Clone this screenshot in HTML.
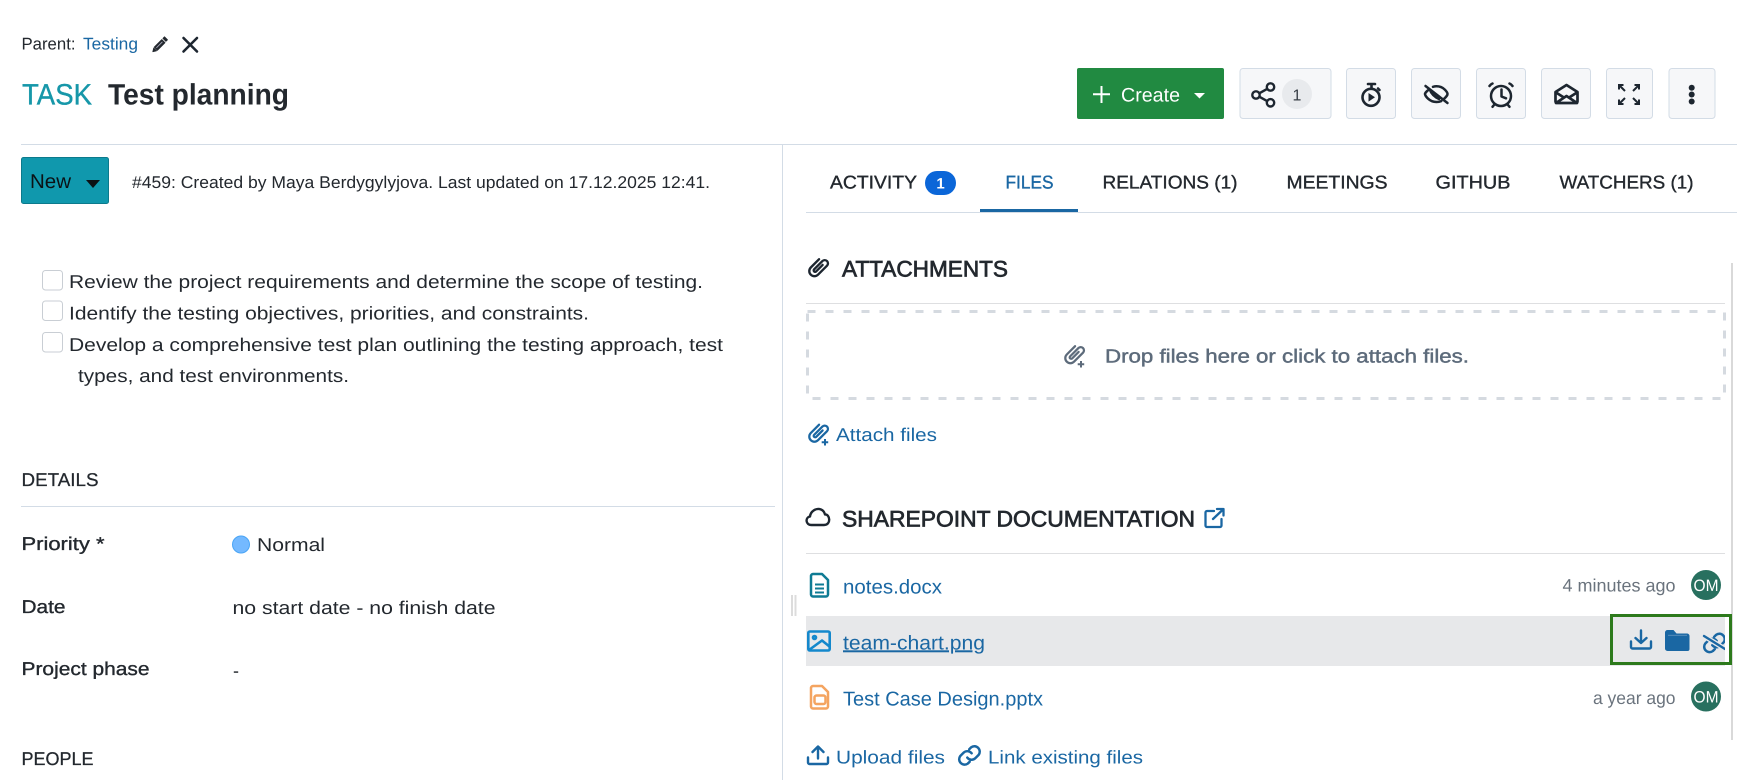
<!DOCTYPE html>
<html lang="en"><head><meta charset="utf-8"><title>Test planning</title>
<style>
html,body{margin:0;padding:0;background:#fff;width:1737px;height:780px;overflow:hidden}
svg{display:block}
text{font-family:"Liberation Sans",Arial,sans-serif;font-size:18.5px;fill:#23282e;text-rendering:geometricPrecision;white-space:pre}
.l{fill:#1a67a3}.m{stroke:#23282e;stroke-width:.35}.mb{stroke:#1a67a3;stroke-width:.35}
.h{font-size:22.5px;font-weight:400;stroke:#23282e;stroke-width:.7}
.s{fill:none;stroke:#1d2630;stroke-width:2.400;stroke-linecap:round;stroke-linejoin:round}
.b{fill:none;stroke:#1a67a3;stroke-width:2.300;stroke-linecap:round;stroke-linejoin:round}
.g{fill:#6a737d;font-size:18px}
</style></head><body>
<svg width="1737" height="780" viewBox="0 0 1737 780" xmlns="http://www.w3.org/2000/svg">
<defs>
<path id="clip" d="M3 4.500v11.500a5 5 0 0 0 10 0V3.500a3.200 3.200 0 0 0-6.400 0V15a1.400 1.400 0 0 0 2.800 0V6" fill="none" stroke-linecap="round" stroke-linejoin="round"/>
<path id="chain" d="M10 14a5 5 0 0 0 7.500.5l3-3a5 5 0 0 0-7-7l-1.700 1.700M14 10a5 5 0 0 0-7.500-.5l-3 3a5 5 0 0 0 7 7l1.700-1.700" fill="none" stroke-linecap="round" stroke-linejoin="round"/>
</defs>
<!-- lines -->
<rect x="21" y="144" width="1716" height="1" fill="#d3dce6"/>
<rect x="782" y="145" width="1" height="635" fill="#d3dce6"/>
<!-- parent -->
<text x="21.500" y="49.500" textLength="54" lengthAdjust="spacingAndGlyphs" style="font-size:17px">Parent:</text>
<text class="l" x="83" y="49.500" textLength="55" lengthAdjust="spacingAndGlyphs" style="font-size:17px">Testing</text>
<g transform="translate(152,36)"><path d="M12.500.8l3 3-1.600 1.600-3-3zM9.800 3.500l3.200 3.200-7.600 7.600-3.200-3.200zM1.700 12l2.800 2.800-3.700.9z" fill="#23282e" stroke="#23282e" stroke-width=".8" stroke-linejoin="round"/><path d="M10.400 5.800l-6 6" stroke="#aab" stroke-width=".9"/></g>
<path d="M183.500 38L197 51.500M197 38L183.500 51.500" stroke="#1d2630" stroke-width="2.600" stroke-linecap="round" fill="none"/>
<!-- title -->
<text x="22" y="104.300" textLength="70" lengthAdjust="spacingAndGlyphs" style="font-size:29.500px;fill:#1697a9;stroke:#1697a9;stroke-width:.35">TASK</text>
<text x="108" y="104.300" textLength="181" lengthAdjust="spacingAndGlyphs" style="font-size:29.500px;font-weight:700;fill:#23282e">Test planning</text>
<!-- create -->
<rect x="1077" y="68" width="147" height="51" rx="2" fill="#218a41"/>
<path d="M1093 94.300h17M1101.500 86v17" stroke="#fff" stroke-width="2" fill="none"/>
<text x="1121" y="101.300" textLength="59" lengthAdjust="spacingAndGlyphs" style="font-size:19.500px;fill:#fff">Create</text>
<path d="M1194 93h11l-5.500 5.500z" fill="#fff"/>
<!-- buttons -->
<g fill="#f6f7f9" stroke="#d3dce6" stroke-width="1">
<rect x="1240" y="68.500" width="91" height="50" rx="3"/>
<rect x="1346.500" y="68.500" width="49" height="50" rx="3"/>
<rect x="1411.500" y="68.500" width="49" height="50" rx="3"/>
<rect x="1476.500" y="68.500" width="49" height="50" rx="3"/>
<rect x="1541.500" y="68.500" width="49" height="50" rx="3"/>
<rect x="1606.500" y="68.500" width="46" height="50" rx="3"/>
<rect x="1669" y="68.500" width="46" height="50" rx="3"/>
</g>
<!-- share -->
<g class="s"><circle cx="1256" cy="95" r="3.700"/><circle cx="1270.500" cy="87" r="3.700"/><circle cx="1270.500" cy="102.800" r="3.700"/><path d="M1259.500 93.200l7.600-4.300M1259.500 96.800l7.600 4.300"/></g>
<rect x="1282" y="79" width="30" height="30" rx="15" fill="#e8eaed"/>
<text x="1297" y="100.500" text-anchor="middle" style="font-size:16px;fill:#3a4048">1</text>
<!-- stopwatch -->
<g class="s" style="stroke-width:2.600"><circle cx="1371" cy="97.300" r="8.500"/><path d="M1368 84h7M1371.500 84v4M1378 88.500l1.500 1.500"/></g><path d="M1368.500 93l6.500 4.300-6.500 4.300z" fill="#1d2630"/>
<!-- eye off -->
<g class="s" style="stroke-width:2.500"><path d="M1429 89.500c-2.600 1.800-4 3.800-4 4.500 0 1.500 4 8 11.500 8 1.700 0 3.300-.3 4.700-.9M1433 86.800c1.100-.3 2.300-.5 3.500-.5 7.500 0 11 6.300 11 7.700 0 .9-1.200 2.900-3.300 4.600M1425.500 86l22 17M1430 90c1 3.300 4.500 7 9 9"/></g>
<!-- alarm -->
<g class="s" style="stroke-width:2.500"><circle cx="1501" cy="96" r="10"/><path d="M1501.500 89.500v7l4.500 1.800M1489.500 86c.8-1.200 1.800-2 3-2.500M1512.500 86c-.8-1.200-1.800-2-3-2.500M1494 105l-1.500 1.800M1508 105l1.500 1.800"/></g>
<!-- mail -->
<g class="s" style="stroke-width:2.700"><path d="M1555.500 92l11-7 11 7v9.500a1.500 1.500 0 0 1-1.500 1.500h-19a1.500 1.500 0 0 1-1.500-1.500zM1556 92.500l7.500 4.800M1577 92.500l-7.500 4.800M1556 103l10.500-7 10.500 7"/></g>
<!-- expand -->
<g class="s" style="stroke-width:2;stroke-linecap:butt;stroke-linejoin:miter"><path d="M1619 89.500V85h4.500M1619 85l6 6M1639 89.500V85h-4.500M1639 85l-6 6M1619 99.500v4.500h4.500M1619 104l6-6M1639 99.500v4.500h-4.500M1639 104l-6-6"/></g>
<!-- dots -->
<circle cx="1691.700" cy="87.700" r="3" fill="#1d2630"/><circle cx="1691.700" cy="94.500" r="3" fill="#1d2630"/><circle cx="1691.700" cy="101.500" r="3" fill="#1d2630"/>
<!-- status -->
<rect x="21.500" y="157.500" width="87" height="46" rx="2" fill="#1098ad" stroke="#0c7a8c"/>
<text x="30" y="188" textLength="41" lengthAdjust="spacingAndGlyphs" style="font-size:20px;fill:#0b1115">New</text>
<path d="M86 180h14l-7 8z" fill="#0b1115"/>
<text x="132" y="187.800" textLength="578" lengthAdjust="spacingAndGlyphs" style="font-size:17px">#459: Created by Maya Berdygylyjova. Last updated on 17.12.2025 12:41.</text>
<!-- checklist -->
<g fill="#fff" stroke="#c9ced4" stroke-width="1"><rect x="42.500" y="270.500" width="20" height="19.500" rx="3"/><rect x="42.500" y="301" width="20" height="19.500" rx="3"/><rect x="42.500" y="332.500" width="20" height="19.500" rx="3"/></g>
<text x="69" y="288" textLength="634" lengthAdjust="spacingAndGlyphs">Review the project requirements and determine the scope of testing.</text>
<text x="69" y="319.700" textLength="520" lengthAdjust="spacingAndGlyphs">Identify the testing objectives, priorities, and constraints.</text>
<text x="69" y="351" textLength="654" lengthAdjust="spacingAndGlyphs">Develop a comprehensive test plan outlining the testing approach, test</text>
<text x="78" y="382" textLength="271" lengthAdjust="spacingAndGlyphs">types, and test environments.</text>
<!-- details -->
<text x="21.500" y="486" textLength="77" lengthAdjust="spacingAndGlyphs" style="stroke:#23282e;stroke-width:.25">DETAILS</text>
<rect x="21" y="506" width="754" height="1" fill="#d3dce6"/>
<text class="m" x="21.500" y="550" textLength="83" lengthAdjust="spacingAndGlyphs">Priority *</text>
<circle cx="241" cy="544.500" r="8.500" fill="#74b9ff" stroke="#4aa5f5"/>
<text x="257" y="551" textLength="68" lengthAdjust="spacingAndGlyphs">Normal</text>
<text class="m" x="21.500" y="613" textLength="44" lengthAdjust="spacingAndGlyphs">Date</text>
<text x="232.500" y="614" textLength="263" lengthAdjust="spacingAndGlyphs">no start date - no finish date</text>
<text class="m" x="21.500" y="675" textLength="128" lengthAdjust="spacingAndGlyphs">Project phase</text>
<text x="233" y="677" textLength="6" lengthAdjust="spacingAndGlyphs">-</text>
<text x="21.500" y="765" textLength="72" lengthAdjust="spacingAndGlyphs" style="stroke:#23282e;stroke-width:.25">PEOPLE</text>
<!-- tabs -->
<rect x="806" y="212" width="931" height="1" fill="#d3dce6"/>
<text class="m" x="830" y="188.700" textLength="87" lengthAdjust="spacingAndGlyphs">ACTIVITY</text>
<rect x="925" y="171" width="31" height="24" rx="12" fill="#0b66d8"/>
<text x="940.500" y="188.500" text-anchor="middle" style="font-size:15px;font-weight:700;fill:#fff">1</text>
<text class="l mb" x="1005.500" y="188.700" textLength="48" lengthAdjust="spacingAndGlyphs">FILES</text>
<rect x="980" y="209" width="98" height="3" fill="#1a67a3"/>
<text class="m" x="1102.500" y="188.700" textLength="135" lengthAdjust="spacingAndGlyphs">RELATIONS (1)</text>
<text class="m" x="1286.500" y="188.700" textLength="101" lengthAdjust="spacingAndGlyphs">MEETINGS</text>
<text class="m" x="1435.500" y="188.700" textLength="75" lengthAdjust="spacingAndGlyphs">GITHUB</text>
<text class="m" x="1559.500" y="188.700" textLength="134" lengthAdjust="spacingAndGlyphs">WATCHERS (1)</text>
<!-- attachments -->
<use href="#clip" transform="translate(818,267.500) rotate(45) scale(1.020) translate(-8,-11)" stroke="#1d2630" stroke-width="2.300"/>
<text class="h" x="842" y="276.300" textLength="166" lengthAdjust="spacingAndGlyphs">ATTACHMENTS</text>
<rect x="806" y="303" width="919" height="1" fill="#dedfe1"/>
<rect x="807.500" y="311.500" width="917" height="87" fill="none" stroke="#d5dae0" stroke-width="3" stroke-dasharray="8 10"/>
<use href="#clip" transform="translate(1074,354.500) rotate(45) scale(1.020) translate(-8,-11)" stroke="#5d6b7b" stroke-width="2.200"/>
<path d="M1081 361v6.500M1077.700 364.300h6.500" stroke="#5d6b7b" stroke-width="2"/>
<text x="1105" y="362.300" textLength="364" lengthAdjust="spacingAndGlyphs" style="font-size:19px;fill:#5d6b7b;stroke:#5d6b7b;stroke-width:.45">Drop files here or click to attach files.</text>
<use href="#clip" transform="translate(818,433) rotate(45) scale(1.020) translate(-8,-11)" stroke="#1a67a3" stroke-width="2.200"/>
<path d="M825 439v6.500M821.700 442.300h6.500" stroke="#1a67a3" stroke-width="2"/>
<text class="l" x="836" y="441" textLength="101" lengthAdjust="spacingAndGlyphs">Attach files</text>
<!-- sharepoint -->
<path d="M811.500 525c-6 0-6.500-7.500-1.500-8.500 .5-5 6-9 11-7 2.500 1 3.500 3 4 5 5-.5 6.500 10.500-1 10.500z" class="s"/>
<text class="h" x="842" y="526.300" textLength="353" lengthAdjust="spacingAndGlyphs">SHAREPOINT DOCUMENTATION</text>
<g class="b"><path d="M1214 511h-7a1.500 1.500 0 0 0-1.500 1.500v13a1.500 1.500 0 0 0 1.500 1.500h13a1.500 1.500 0 0 0 1.500-1.500V519M1213 519l10-9.500M1217 509h6.500v6.500"/></g>
<rect x="806" y="553" width="919" height="1" fill="#dedfe1"/>
<rect x="806" y="616" width="919" height="50" fill="#e7e8ea"/>
<!-- handle -->
<rect x="791" y="595" width="2" height="21" fill="#dcdcdc"/><rect x="794.500" y="595" width="2" height="21" fill="#dcdcdc"/>
<!-- file icons -->
<g fill="none" stroke="#0f7b94" stroke-width="2.500" stroke-linejoin="round"><path d="M811 576a2 2 0 0 1 2-2h9l6 6v14.500a2 2 0 0 1-2 2h-13a2 2 0 0 1-2-2z"/><path d="M815 584.500h9M815 588.500h9M815 592.500h9" stroke-width="2"/></g>
<text class="l" x="843" y="593.300" textLength="99" lengthAdjust="spacingAndGlyphs" style="font-size:20px">notes.docx</text>
<g fill="none" stroke="#1488cc" stroke-width="2.600" stroke-linejoin="round"><rect x="808.300" y="631.500" width="21.400" height="19" rx="1.500"/><circle cx="814.500" cy="637.500" r="1.500"/><path d="M809 650l13-9.500 7.500 6"/></g>
<text class="l" x="843" y="649.300" textLength="142" lengthAdjust="spacingAndGlyphs" style="font-size:20px;text-decoration:underline">team-chart.png</text>
<g fill="none" stroke="#f4a460" stroke-width="2.500" stroke-linejoin="round"><path d="M811 688a2 2 0 0 1 2-2h9l6 6v14.500a2 2 0 0 1-2 2h-13a2 2 0 0 1-2-2z"/><rect x="814.500" y="695.500" width="11" height="8.500" rx="2"/></g>
<text class="l" x="843" y="705.300" textLength="200" lengthAdjust="spacingAndGlyphs" style="font-size:20px">Test Case Design.pptx</text>
<!-- right column -->
<text class="g" x="1562.500" y="591.500" textLength="113" lengthAdjust="spacingAndGlyphs">4 minutes ago</text>
<circle cx="1706" cy="585" r="15" fill="#28705f"/>
<text x="1706" y="591" text-anchor="middle" textLength="25" lengthAdjust="spacingAndGlyphs" style="font-size:16.500px;fill:#fff">OM</text>
<text class="g" x="1593" y="704" textLength="82.500" lengthAdjust="spacingAndGlyphs">a year ago</text>
<circle cx="1706" cy="696.500" r="15" fill="#28705f"/>
<text x="1706" y="702.500" text-anchor="middle" textLength="25" lengthAdjust="spacingAndGlyphs" style="font-size:16.500px;fill:#fff">OM</text>
<rect x="1731" y="263" width="2" height="477" fill="#d9d9d9"/>
<!-- hover actions -->
<g class="b" style="stroke-width:2.400"><path d="M1641 630.500v12M1635.500 638l5.500 5 5.500-5M1631 641.500v5.500a1.500 1.500 0 0 0 1.500 1.500h17a1.500 1.500 0 0 0 1.500-1.500v-5.500"/></g>
<path d="M1665 632.500a2.500 2.500 0 0 1 2.500-2.500h6l3 3.500h10.500a2.500 2.500 0 0 1 2.500 2.500v13a2 2 0 0 1-2 2h-20a2.500 2.500 0 0 1-2.500-2.500z" fill="#1a67a3"/>
<rect x="1668" y="634.800" width="19" height="1.200" fill="#4d87b6"/>
<g clip-path="url(#c)"><use href="#chain" transform="translate(1701.500,630) scale(1.080)" stroke="#1a67a3" stroke-width="2.300"/><path d="M1704 636l21 13" stroke="#e7e8ea" stroke-width="5"/><path d="M1704 636l21 13" stroke="#1a67a3" stroke-width="2.300" stroke-linecap="round"/></g>
<clipPath id="c"><rect x="1695" y="625" width="30" height="35"/></clipPath>
<rect x="1611.500" y="615.500" width="119" height="48" fill="none" stroke="#2d7a1c" stroke-width="3"/>
<!-- footer links -->
<g class="b" style="stroke-width:2.400"><path d="M818 747v11.500M812.500 752l5.500-5.500 5.500 5.500M808 757.500v5a1.500 1.500 0 0 0 1.500 1.500h17a1.500 1.500 0 0 0 1.500-1.500v-5"/></g>
<text class="l" x="836" y="763.300" textLength="109" lengthAdjust="spacingAndGlyphs">Upload files</text>
<use href="#chain" transform="translate(956.500,742.500) scale(1.080)" stroke="#1a67a3" stroke-width="2.300"/>
<text class="l" x="988" y="763.300" textLength="155" lengthAdjust="spacingAndGlyphs">Link existing files</text>
</svg>
</body></html>
